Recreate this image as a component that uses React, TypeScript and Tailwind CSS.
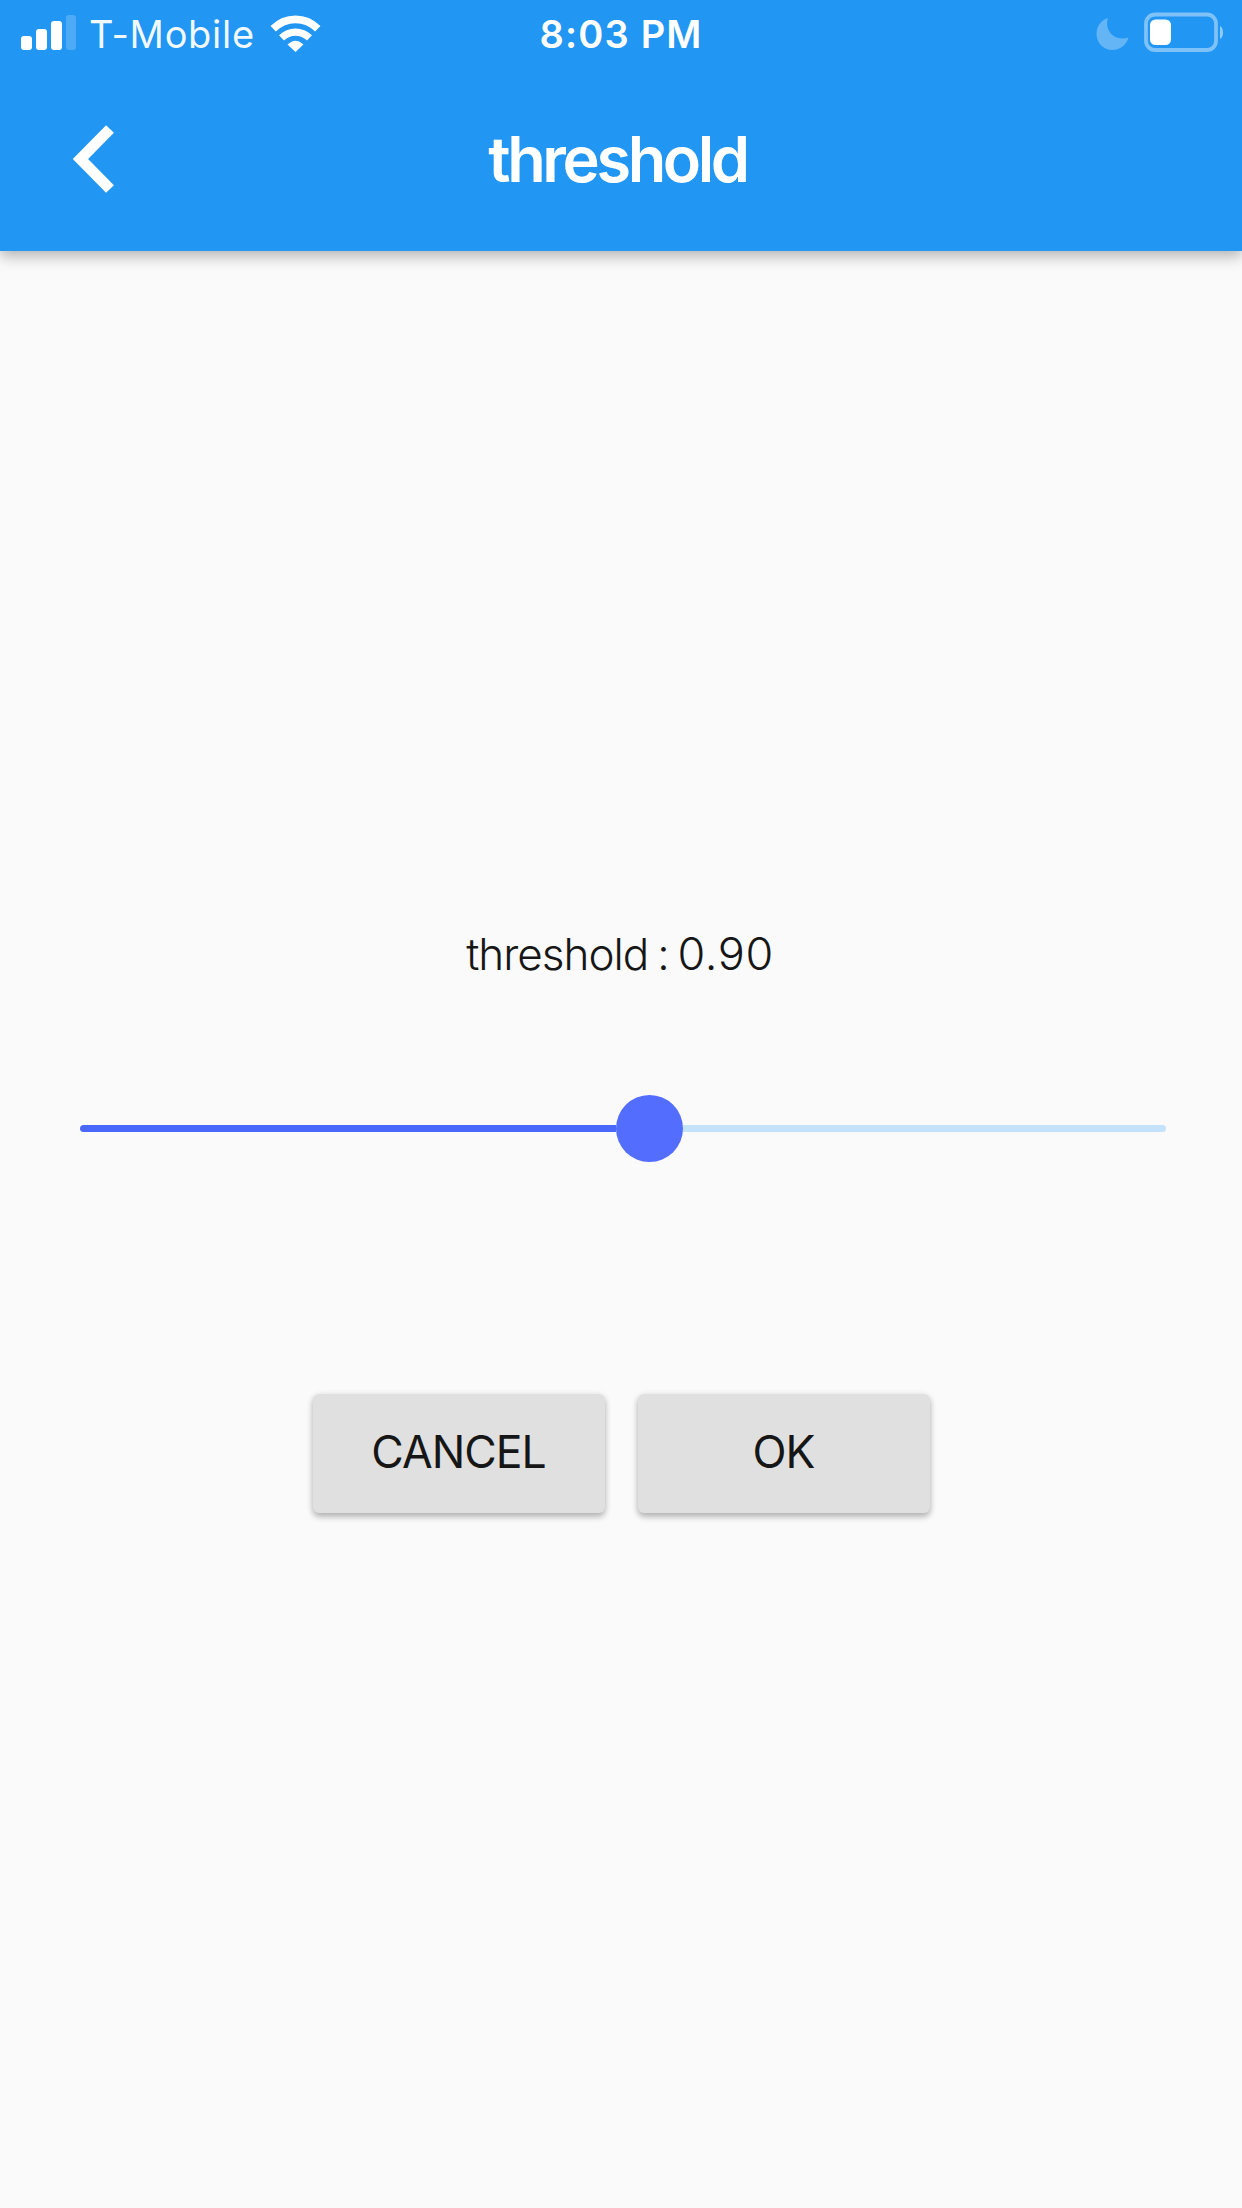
const signalBars = [
  'h-[14px] w-[11px] bg-white',
  'h-[21px] w-[11px] bg-white',
  'h-[29px] w-[11px] bg-white',
  'h-[35px] w-[10px] bg-white/20',
];

function StatusBar() {
  return (
    <div className="grid h-[68px] grid-cols-3 items-start text-[38px] leading-[68px]">
      <div className="flex items-start pl-[21px]">
        <div className="flex h-[50px] items-end gap-[4px]">
          {signalBars.map((bar) => (
            <span key={bar} className={`rounded-[3px] ${bar}`} />
          ))}
        </div>
        <span className="ml-[13px] w-[167px] whitespace-nowrap tracking-[0.7px] text-white/95">T-Mobile</span>
        <svg className="mt-[14px] ml-[14px] h-[39px] w-[51px]" viewBox="0 0 51 39" fill="none" aria-label="Wi-Fi">
          <path d="M3.2 14.7C16 2.2 35 2.2 47.800 14.700" stroke="white" strokeWidth="7.600" />
          <path d="M11.500 23.800C19.500 16.100 31.500 16.100 39.500 23.800" stroke="white" strokeWidth="7.200" />
          <path d="M17.500 30.500Q25.500 22.800 33.500 30.500L25.500 38Z" fill="white" />
        </svg>
      </div>
      <div className="text-center font-semibold tracking-[1.2px]">8:03 PM</div>
      <div className="flex items-start justify-end pr-[17px]">
        <svg className="mt-[17px] mr-[13px] h-[34px] w-[34px]" viewBox="0 0 34 34" aria-label="Do not disturb">
          <path d="M12 1C8 13 18 25 32.500 20.500C30.500 28 24 33 16.500 33C7.500 33 0.500 26 0.500 17C0.500 9.500 5 3 12 1Z" fill="white" fillOpacity="0.3" />
        </svg>
        <svg className="mt-[12px] h-[41px] w-[82px]" viewBox="0 0 82 41" fill="none" aria-label="Battery">
          <rect x="3" y="2.500" width="70" height="35.500" rx="9" stroke="white" strokeOpacity="0.42" strokeWidth="3.800" />
          <rect x="7" y="7.500" width="21" height="25.500" rx="5.500" fill="white" />
          <path d="M77 14C81 15.500 81 25.500 77 27Z" fill="white" fillOpacity="0.5" />
        </svg>
      </div>
    </div>
  );
}

export default function App() {
  return (
    <div className="flex h-[2208px] w-[1242px] flex-col bg-[#fafafa] font-['Inter',sans-serif] text-[#161616]">
      <header className="relative h-[251px] shrink-0 bg-[#2196f3] text-white shadow-[0_6px_15px_rgba(0,0,0,0.2),0_3px_12px_rgba(0,0,0,0.12)]">
        <StatusBar />
        <div className="grid h-[183px] grid-cols-3 items-start">
          <button type="button" aria-label="Back" className="mt-[57px] ml-[72px] w-[42px]">
            <svg className="h-[68px] w-[42px]" viewBox="0 0 42 68" fill="none">
              <path d="M38 4L8.500 34L38 64" stroke="white" strokeWidth="11" />
            </svg>
          </button>
          <h1 className="mt-[49px] pr-[7px] text-center text-[63px] leading-[84px] font-semibold tracking-[-3.4px]">threshold</h1>
        </div>
      </header>
      <main className="flex flex-1 flex-col items-center">
        <p className="mt-[675px] pr-[2px] text-[44px] leading-[56px] font-[350] tracking-[-1px] [word-spacing:-2.500px]">
          threshold : <span className="text-[45px] tracking-[0.6px]">0.90</span>
        </p>
        <div className="mt-[113px] ml-[80px] flex h-[67px] w-[1086px] items-center self-start">
          <div className="h-[7px] w-[536px] rounded-l-full bg-[#4b68fd]" />
          <div className="h-[67px] w-[67px] rounded-full bg-[#536dfe]" />
          <div className="h-[7px] flex-1 rounded-r-full bg-[#c5e2fb]" />
        </div>
        <div className="mt-[232px] flex gap-[33px] text-[44.500px] tracking-[-1px]">
          <button type="button" className="h-[119px] w-[292px] rounded-[6px] bg-[#e0e0e0] pb-[2px] shadow-[0_4px_6px_rgba(0,0,0,0.24),0_1px_7px_rgba(0,0,0,0.1)]">CANCEL</button>
          <button type="button" className="h-[119px] w-[292px] rounded-[6px] bg-[#e0e0e0] pb-[2px] shadow-[0_4px_6px_rgba(0,0,0,0.24),0_1px_7px_rgba(0,0,0,0.1)]">OK</button>
        </div>
      </main>
    </div>
  );
}
